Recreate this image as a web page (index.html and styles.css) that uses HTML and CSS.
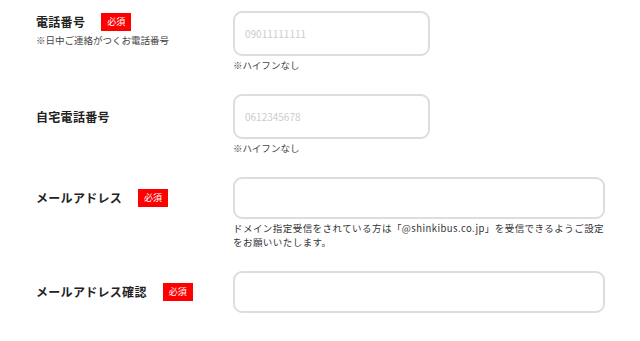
FILE: index.html
```html
<!DOCTYPE html>
<html lang="ja">
<head>
    <meta charset="UTF-8">
    <meta name="viewport" content="width=device-width, initial-scale=1.0">
    <title>お問い合わせフォーム</title>
    <link rel="stylesheet" href="styles.css">
</head>
<body>

    <div class="form">
        <!-- 電話番号 -->
        <div class="row">
            <div class="label-cell has-note">
                <div class="label-line">
                    <span class="label">電話番号</span>
                    <span class="required">必須</span>
                </div>
                <p class="sub-note">※日中ご連絡がつくお電話番号</p>
            </div>
            <div class="field">
                <input type="tel" class="input short" placeholder="09011111111">
                <p class="note">※ハイフンなし</p>
            </div>
        </div>

        <!-- 自宅電話番号 -->
        <div class="row">
            <div class="label-cell">
                <div class="label-line">
                    <span class="label">自宅電話番号</span>
                </div>
            </div>
            <div class="field">
                <input type="tel" class="input short" placeholder="0612345678">
                <p class="note">※ハイフンなし</p>
            </div>
        </div>

        <!-- メールアドレス -->
        <div class="row">
            <div class="label-cell wide">
                <div class="label-line">
                    <span class="label">メールアドレス</span>
                    <span class="required">必須</span>
                </div>
            </div>
            <div class="field">
                <input type="email" class="input long">
                <p class="note dark">ドメイン指定受信をされている方は「@shinkibus.co.jp」を受信できるようご設定<br>をお願いいたします。</p>
            </div>
        </div>

        <!-- メールアドレス確認 -->
        <div class="row">
            <div class="label-cell wide">
                <div class="label-line">
                    <span class="label">メールアドレス確認</span>
                    <span class="required">必須</span>
                </div>
            </div>
            <div class="field">
                <input type="email" class="input long">
            </div>
        </div>
    </div>

</body>
</html>
```

FILE: styles.css
```css
body {
    font-family: "Noto Sans CJK JP", "Noto Sans", sans-serif;
    background: #fff;
    color: #222;
    margin: 0;
    padding: 0;
}

.form {
    padding: 11px 0 0 36px;
}

/* 行 */
.row {
    display: grid;
    grid-template-columns: 197px 1fr;
    margin-bottom: 22px;
}

.label-cell {
    height: 45px;
    display: flex;
    flex-direction: column;
    justify-content: center;
}

.label-cell.wide {
    height: 42px;
}

.label-cell.has-note {
    justify-content: flex-start;
    padding-top: 2px;
}

.label-line {
    display: flex;
    align-items: center;
}

.label {
    font-size: 12px;
    font-weight: bold;
    letter-spacing: 0.3px;
    line-height: 18px;
}

.required {
    background: #f00;
    color: #fff;
    font-size: 9px;
    width: 30px;
    height: 18px;
    line-height: 18px;
    text-align: center;
    margin-left: 16px;
}

.sub-note {
    margin: 3px 0 0;
    font-size: 9.5px;
    line-height: 13px;
    color: #444;
}

/* 入力欄 */
.input {
    display: block;
    box-sizing: border-box;
    border: 2px solid #ddd;
    border-radius: 9px;
    padding: 0 10px;
    font-family: inherit;
    font-size: 10px;
    color: #333;
    background: #fff;
    outline: none;
}

.input::placeholder {
    color: #ccc;
}

.input.short {
    width: 197px;
    height: 45px;
}

.input.long {
    width: 372px;
    height: 42px;
}

.note {
    margin: 2px 0 0;
    font-size: 9.5px;
    line-height: 14px;
    color: #444;
}

.note.dark {
    color: #333;
    letter-spacing: 0.45px;
    white-space: nowrap;
}
```
